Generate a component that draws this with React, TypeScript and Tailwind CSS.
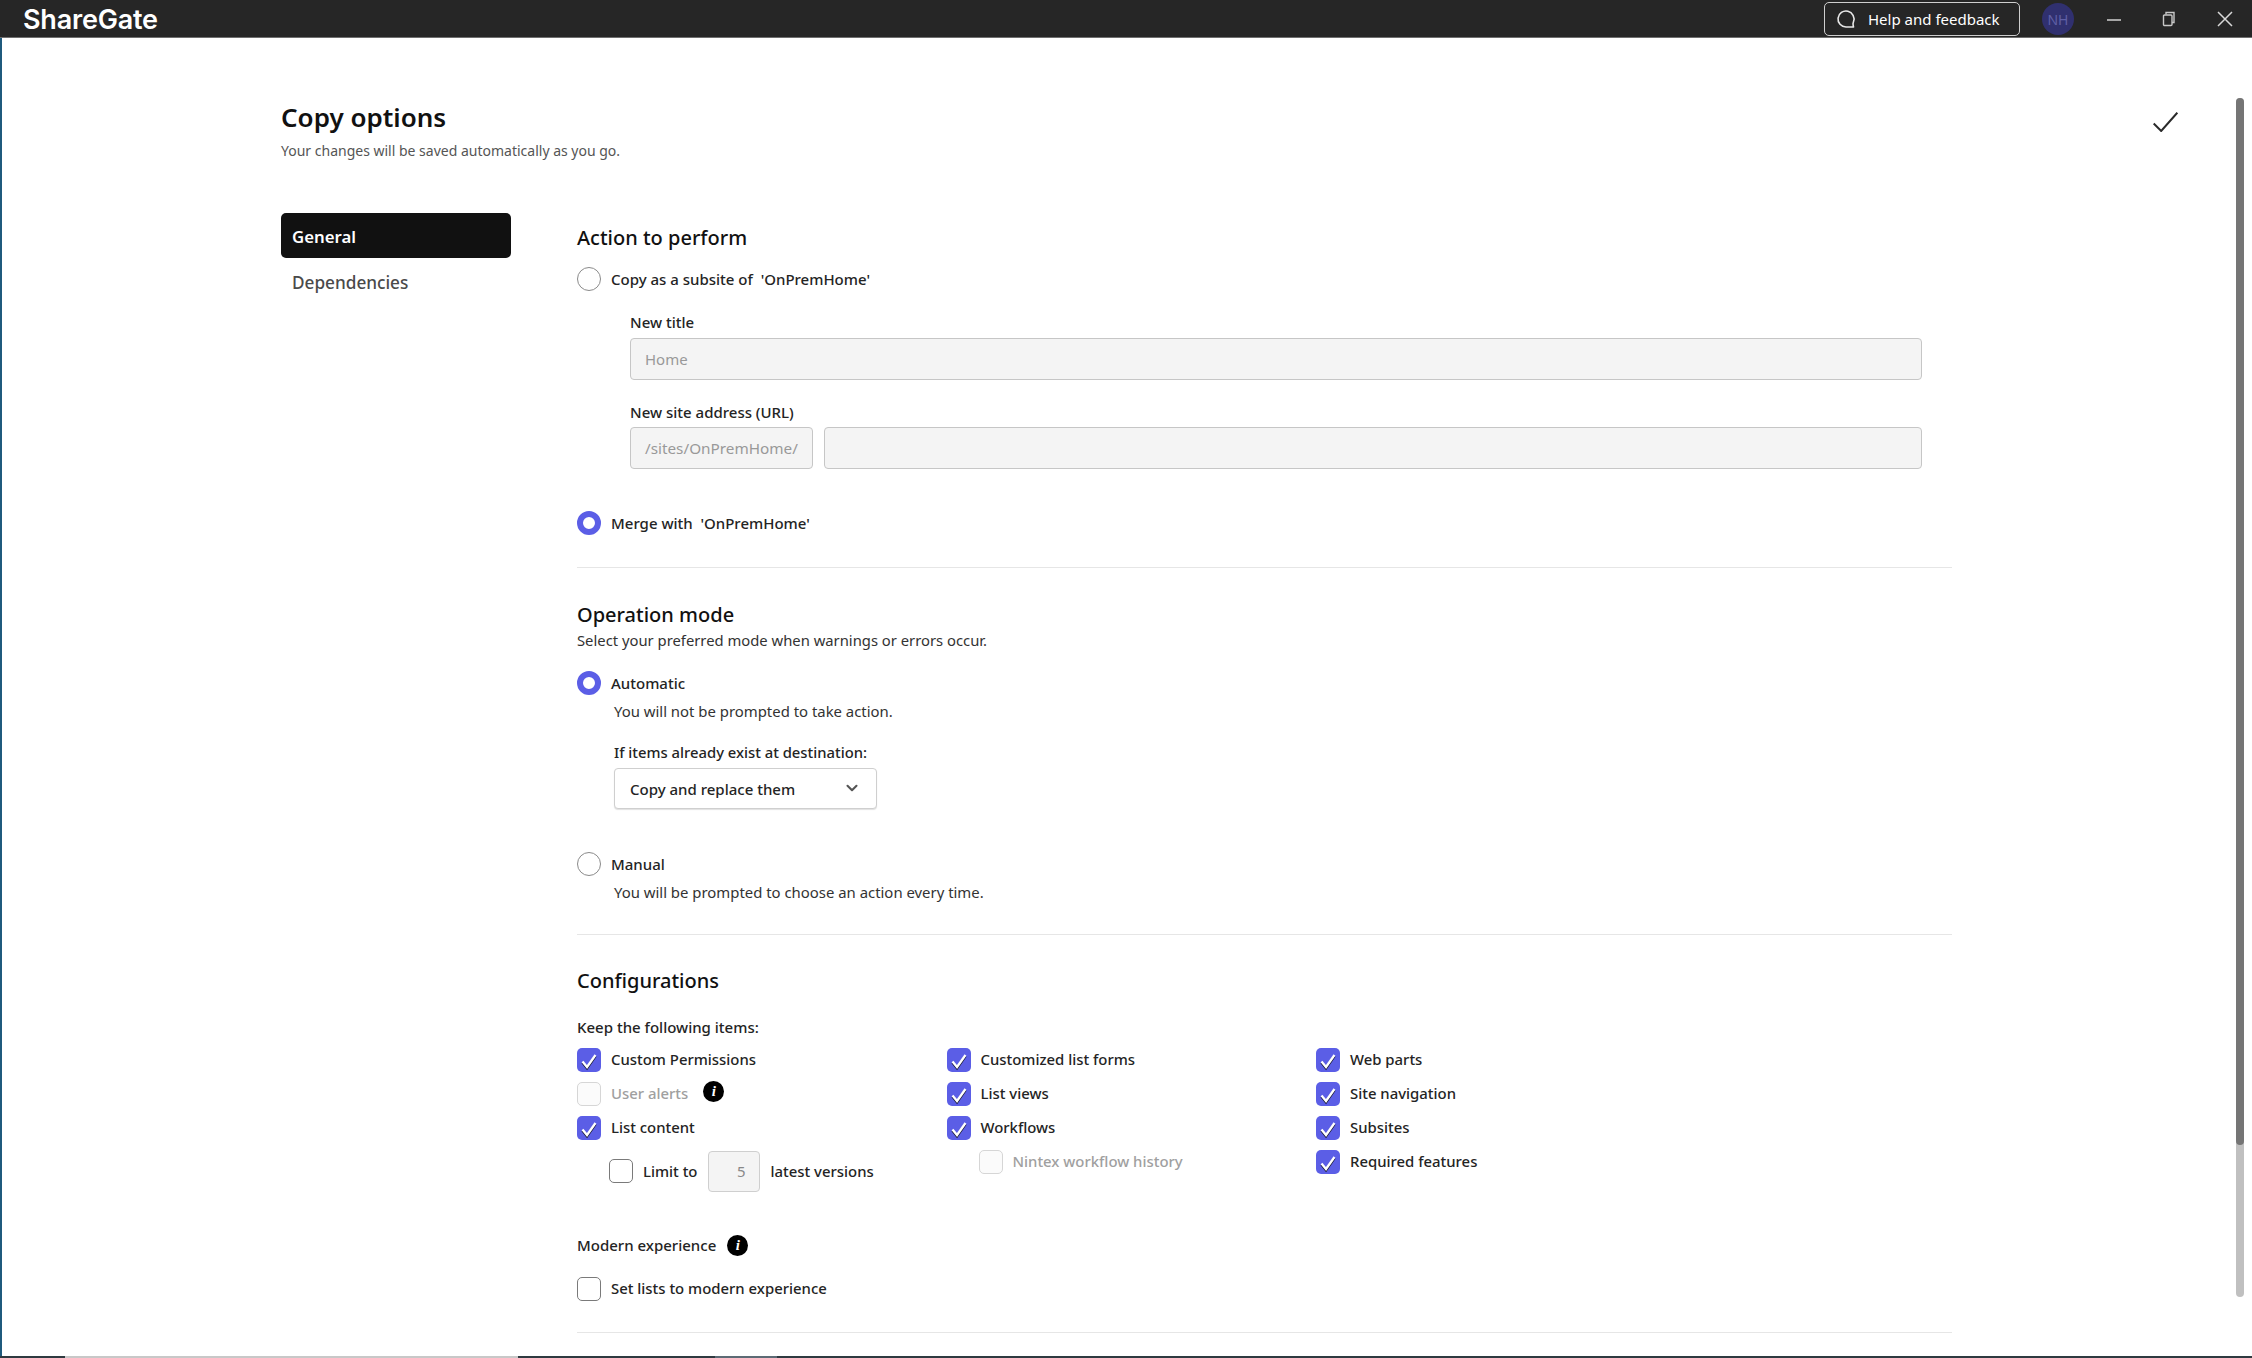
import { ChevronDown } from 'lucide-react';

function Radio({ checked }: { checked?: boolean }) {
  return (
    <span
      className={
        checked
          ? 'w-[24px] h-[24px] rounded-full border-[6.5px] border-[#5b5ee6] bg-white shrink-0'
          : 'w-[24px] h-[24px] rounded-full border-[1.5px] border-[#8a8a8a] bg-white shrink-0'
      }
    />
  );
}

function Check({ state }: { state: 'on' | 'off' | 'disabled' }) {
  if (state === 'on') {
    return (
      <span className="w-[24px] h-[24px] rounded-[5px] bg-[#5b5ee6] shrink-0 flex items-center justify-center">
        <svg width="24" height="24" viewBox="0 0 24 24" fill="none">
          <path d="M5.5 13.5l4.5 5.5 8.5-12" stroke="#17172e" strokeWidth="2.6" transform="translate(0 1)" />
          <path d="M5.5 13.5l4.5 5.5 8.5-12" stroke="#fff" strokeWidth="2.3" />
        </svg>
      </span>
    );
  }
  return (
    <span
      className={
        state === 'off'
          ? 'w-[24px] h-[24px] rounded-[5px] border-[1.5px] border-[#7a7a7a] bg-white shrink-0'
          : 'w-[24px] h-[24px] rounded-[5px] border-[1.5px] border-[#d6d6d6] bg-[#fbfbfb] shrink-0'
      }
    />
  );
}

function CheckRow({ label, state = 'on' }: { label: string; state?: 'on' | 'off' | 'disabled' }) {
  return (
    <div className="flex items-center h-[24px] gap-[10px]">
      <Check state={state} />
      <span className={state === 'disabled' ? 'mb-[2px] text-[14.9px] font-medium text-[#a0a0a0]' : 'mb-[2px] text-[14.9px] font-medium text-[#242424]'}>
        {label}
      </span>
    </div>
  );
}

function Info() {
  return (
    <span className="w-[21px] h-[21px] rounded-full bg-black text-white flex items-center justify-center text-[15px] font-bold italic font-['Liberation_Serif',serif] shrink-0">
      i
    </span>
  );
}

function Divider() {
  return <div className="h-px bg-[#e6e6e6] w-[1375px]" />;
}

function RadioRow({ label, checked, className }: { label: string; checked?: boolean; className?: string }) {
  return (
    <div className={'flex items-center h-[26px] gap-[10px] ' + (className ?? '')}>
      <Radio checked={checked} />
      <span className="text-[15px] font-medium text-[#242424] whitespace-pre">{label}</span>
    </div>
  );
}

export default function App() {
  return (
    <div className="w-full h-screen overflow-hidden flex flex-col bg-white text-[#242424] font-['Noto_Sans',sans-serif]">
      {/* Title bar */}
      <div className="h-[38px] shrink-0 bg-[#262626] border-b border-[#6f6f6f] flex items-center pl-[23px] pt-[1px]">
        <span className="text-[27px] leading-none font-semibold text-white font-['Inter',sans-serif] tracking-[-0.2px]">ShareGate</span>
        <div className="ml-auto flex items-center">
          <button className="h-[34px] w-[196px] border border-[#cfcfcf] rounded-[5px] flex items-center pl-[11px] gap-[12px] text-white text-[15px]">
            <svg width="20" height="20" viewBox="0 0 20 20" fill="none" stroke="#e8e8e8" strokeWidth="1.6">
              <path d="M17.5 18H10a8 8 0 1 1 7.5-5.2c-.5 1.3-.7 2-.4 3z" strokeLinejoin="round" />
            </svg>
            Help and feedback
          </button>
          <div className="w-[32px] h-[32px] rounded-full bg-[#30306f] text-[#5f5fa5] text-[14px] flex items-center justify-center ml-[22px]">NH</div>
          <svg className="ml-[33px]" width="14" height="14" viewBox="0 0 14 14" stroke="#c8c8c8" strokeWidth="1.6">
            <path d="M0 8h14" />
          </svg>
          <svg className="ml-[40px]" width="16" height="16" viewBox="0 0 16 16" fill="none" stroke="#c8c8c8" strokeWidth="1.4">
            <path d="M5 3.5V1.5h8v10h-2" />
            <rect x="2.5" y="4" width="8.5" height="10.5" rx="1" />
          </svg>
          <svg className="ml-[40px] mr-[19px]" width="16" height="16" viewBox="0 0 16 16" stroke="#d8d8d8" strokeWidth="1.5">
            <path d="M1 1l14 14M15 1L1 15" />
          </svg>
        </div>
      </div>

      <div className="flex-1 flex min-h-0 relative">
        {/* window edge */}
        <div className="w-[2px] shrink-0 bg-[#1f5a7d]" />

        <div className="flex-1 pl-[279px] pt-[63px]">
          <div className="flex justify-between items-start pr-[74px]">
            <div>
              <h1 className="h-[32px] leading-[32px] text-[26px] font-semibold text-[#111]">Copy options</h1>
              <p className="mt-[7px] h-[22px] leading-[22px] text-[14px] text-[#555]">Your changes will be saved automatically as you go.</p>
            </div>
            <svg className="mt-[11px]" width="25" height="20" viewBox="0 0 25 20" fill="none" stroke="#2a2a2a" strokeWidth="2">
              <path d="M0.7 11.5l7.5 7.5L24.3 0.7" />
            </svg>
          </div>

          <div className="flex mt-[51px]">
            <nav className="w-[230px] mr-[66px] shrink-0">
              <div className="h-[45px] pt-[2px] rounded-[5px] bg-[#111] text-white text-[16.8px] font-semibold flex items-center pl-[11px]">General</div>
              <div className="h-[47px] pt-[2px] text-[#4a4a4a] text-[17.2px] font-medium flex items-center pl-[11px]">Dependencies</div>
            </nav>

            <div className="pt-[10px]">
              {/* Action to perform */}
              <h2 className="h-[30px] leading-[30px] text-[20px] font-medium text-[#111]">Action to perform</h2>
              <RadioRow className="mt-[13px]" label="Copy as a subsite of  'OnPremHome'" />
              <div className="pl-[53px] w-[1345px]">
                <label className="block mt-[19px] h-[22px] leading-[22px] text-[15px] font-medium">New title</label>
                <div className="mt-[5px] h-[42px] rounded-[4px] border border-[#c6c6c6] bg-[#f4f4f4] flex items-center pl-[14px] text-[15px] text-[#999]">Home</div>
                <label className="block mt-[21px] h-[22px] leading-[22px] text-[15px] font-medium">New site address (URL)</label>
                <div className="mt-[4px] flex gap-[11px]">
                  <div className="h-[42px] w-[183px] rounded-[4px] border border-[#c6c6c6] bg-[#f4f4f4] flex items-center pl-[14px] text-[15.3px] text-[#999]">/sites/OnPremHome/</div>
                  <div className="h-[42px] flex-1 rounded-[4px] border border-[#c6c6c6] bg-[#f4f4f4]" />
                </div>
              </div>
              <RadioRow className="mt-[41px]" checked label="Merge with  'OnPremHome'" />
              <div className="mt-[31px]"><Divider /></div>

              {/* Operation mode */}
              <h2 className="mt-[33px] h-[28px] leading-[28px] text-[20px] font-medium text-[#111]">Operation mode</h2>
              <p className="h-[22px] leading-[22px] text-[14.8px] text-[#333]">Select your preferred mode when warnings or errors occur.</p>
              <RadioRow className="mt-[19px]" checked label="Automatic" />
              <div className="pl-[37px]">
                <p className="mt-[4px] h-[22px] leading-[22px] text-[14.9px] text-[#333]">You will not be prompted to take action.</p>
                <label className="block mt-[19px] h-[22px] leading-[22px] text-[14.8px] font-medium">If items already exist at destination:</label>
                <div className="mt-[5px] h-[41px] w-[263px] rounded-[4px] border border-[#cfcfcf] bg-white shadow-[0_1px_1px_rgba(0,0,0,0.12)] flex items-center justify-between pl-[15px] pr-[15px] pt-[2px] text-[15px] font-medium">
                  Copy and replace them
                  <ChevronDown size={18} strokeWidth={2.8} className="text-[#555] -mt-[3px]" />
                </div>
              </div>
              <RadioRow className="mt-[42px]" label="Manual" />
              <p className="pl-[37px] mt-[4px] h-[22px] leading-[22px] text-[14.9px] text-[#333]">You will be prompted to choose an action every time.</p>
              <div className="mt-[31px]"><Divider /></div>

              {/* Configurations */}
              <h2 className="mt-[32px] h-[28px] leading-[28px] text-[20px] font-medium text-[#111]">Configurations</h2>
              <p className="mt-[21px] h-[22px] leading-[22px] text-[15px] font-medium">Keep the following items:</p>
              <div className="mt-[10px] grid grid-cols-[369.5px_369.5px_1fr]">
                <div className="flex flex-col gap-[10px]">
                  <CheckRow label="Custom Permissions" />
                  <div className="flex items-center gap-[15px]">
                    <CheckRow label="User alerts" state="disabled" />
                    <span className="-mt-[6px]"><Info /></span>
                  </div>
                  <CheckRow label="List content" />
                  <div className="h-[42px] flex items-center pl-[32px] text-[14.9px] font-medium">
                    <Check state="off" />
                    <span className="ml-[10px]">Limit to</span>
                    <span className="ml-[11px] w-[52px] h-[41px] rounded-[4px] border border-[#cfcfcf] bg-[#f4f4f4] text-[#888] font-normal flex items-center justify-end pr-[14px]">5</span>
                    <span className="ml-[10px]">latest versions</span>
                  </div>
                </div>
                <div className="flex flex-col gap-[10px]">
                  <CheckRow label="Customized list forms" />
                  <CheckRow label="List views" />
                  <CheckRow label="Workflows" />
                  <div className="pl-[32px]"><CheckRow label="Nintex workflow history" state="disabled" /></div>
                </div>
                <div className="flex flex-col gap-[10px]">
                  <CheckRow label="Web parts" />
                  <CheckRow label="Site navigation" />
                  <CheckRow label="Subsites" />
                  <CheckRow label="Required features" />
                </div>
              </div>
              <div className="mt-[41px] h-[24px] flex items-center gap-[11px] text-[15px] font-medium">
                Modern experience
                <Info />
              </div>
              <div className="mt-[20px]"><CheckRow label="Set lists to modern experience" state="off" /></div>
              <div className="mt-[31px]"><Divider /></div>
            </div>
          </div>
        </div>

        {/* overlay scrollbar */}
        <div className="absolute right-[8px] top-[60px] bottom-[59px] w-[8px] rounded-full bg-[#c0c0c0]">
          <div className="h-[1047px] rounded-full bg-[#757575]" />
        </div>
      </div>

      {/* bottom edge of window */}
      <div className="h-[2px] shrink-0 flex">
        <div className="w-[65px] bg-[#2f3a40]" />
        <div className="w-[453px] bg-[#c8c8c8]" />
        <div className="w-[197px] bg-[#2f3a40]" />
        <div className="w-[62px] bg-[#5d6b75]" />
        <div className="flex-1 bg-[#2f3a40]" />
      </div>
    </div>
  );
}
